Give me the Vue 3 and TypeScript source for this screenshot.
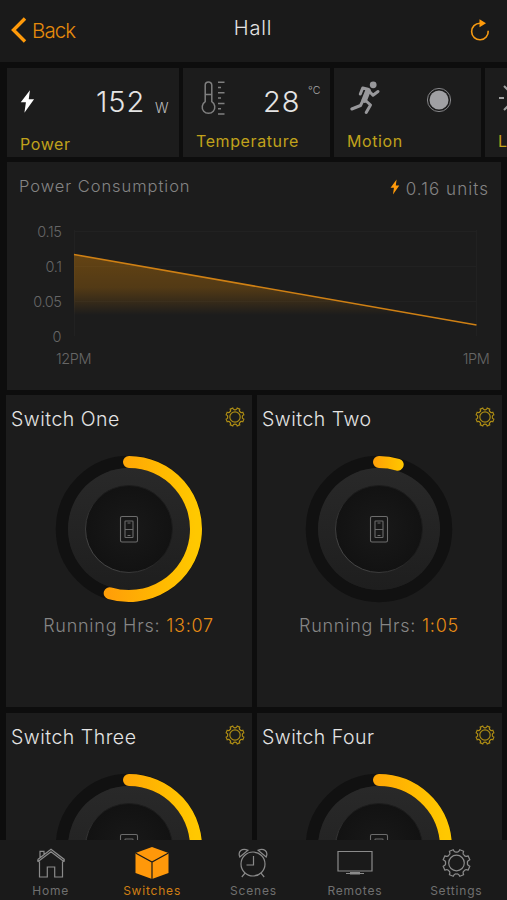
<script setup lang="ts">
interface SwitchCard {
  name: string
  hours?: string
  fraction: number
}

const switches: SwitchCard[] = [
  { name: 'Switch One', hours: '13:07', fraction: 13.117 / 24 },
  { name: 'Switch Two', hours: '1:05', fraction: 1.083 / 24 },
  { name: 'Switch Three', fraction: 0.53 },
  { name: 'Switch Four', fraction: 0.47 },
]

const tabs: string[] = ['Home', 'Switches', 'Scenes', 'Remotes', 'Settings']

function arc(fraction: number): string {
  const a = fraction * Math.PI * 2
  const x = 75 + 67 * Math.sin(a)
  const y = 75 - 67 * Math.cos(a)
  return `M75 8A67 67 0 ${fraction > 0.5 ? 1 : 0} 1 ${x.toFixed(2)} ${y.toFixed(2)}`
}

function gear(outer: number, inner: number, teeth = 8): string {
  const step = (Math.PI * 2) / teeth
  const pt = (r: number, a: number) => `${(15 + r * Math.sin(a)).toFixed(2)} ${(15 - r * Math.cos(a)).toFixed(2)}`
  let d = ''
  for (let i = 0; i < teeth; i++) {
    const a = step * (i + 0.5)
    d += `${i === 0 ? 'M' : 'L'}${pt(outer, a - 0.15)}L${pt(outer, a + 0.15)}`
    d += `Q${pt(inner, a + 0.2)} ${pt(inner + 0.6, a + step / 2)}Q${pt(inner, a + step - 0.2)} ${pt(outer, a + step - 0.15)}`
  }
  return d + 'Z'
}

const gearPath = gear(13.7, 10.4)
</script>

<template>
  <div class="screen">
    <header class="nav">
      <div class="back">
        <svg class="chevron" viewBox="0 0 16 26"><path d="M14 1.5 2.5 13 14 24.5" /></svg>
        <span>Back</span>
      </div>
      <h1 class="title">Hall</h1>
      <svg class="refresh" viewBox="0 0 20 22">
        <path d="M18.2 11.8A8.3 8.3 0 1 1 10 4.2" />
        <path class="head" d="M9.5.3 16 4.3 9.5 8.3z" />
      </svg>
    </header>

    <section class="sensors">
      <article class="sensor power">
        <svg class="bolt" viewBox="0 0 16 26"><path d="M10.6 1 .8 13.8h5.5L4.7 25 15 10.7H9.3z" /></svg>
        <span class="value">152</span><span class="watt">W</span>
        <span class="label">Power</span>
      </article>
      <article class="sensor temp">
        <svg class="thermo" viewBox="0 0 24 36">
          <path d="M4.2 21.7V5.2a3.3 3.3 0 0 1 6.6 0v16.5a6.3 6.3 0 1 1-6.6 0zM4.5 14.5h6" />
          <path d="M17 2.2h6.5M17 12.8h6.5M17 23.4h6.5M17 34h6.5M17 7.5h3M17 18.1h3M17 28.7h3" />
        </svg>
        <span class="value">28</span><span class="degree">°C</span>
        <span class="label">Temperature</span>
      </article>
      <article class="sensor motion">
        <svg class="runner" viewBox="0 0 30 34">
          <circle cx="23.2" cy="3.8" r="3.4" />
          <path class="limb" d="M18 8.2 12.7 7 10.3 13M18.5 9.5 23 14.2 28 10.5M13.5 18.5 10.5 24.5 1.8 28M15 19 20.5 24 16.2 31.5" />
          <path class="torso" d="M18 9.8 14.3 19" />
        </svg>
        <svg class="dot" viewBox="0 0 26 26"><circle cx="13" cy="13" r="11.6" /><circle class="core" cx="13" cy="13" r="9.5" /></svg>
        <span class="label">Motion</span>
      </article>
      <article class="sensor light">
        <svg class="sun" viewBox="0 0 36 36">
          <circle cx="18" cy="18" r="7" />
          <path d="M1 18h5M30 18h5M18 1v5M18 30v5M6 6l4 4M26 26l4 4M6 30l4-4M26 10l4-4" />
        </svg>
        <span class="label">Light</span>
      </article>
    </section>

    <section class="usage">
      <div class="usage-head">
        <span class="usage-title">Power Consumption</span>
        <span class="units">
          <svg class="mini-bolt" viewBox="0 0 16 26"><path d="M10.6 1 .8 14.2h5.5L4.7 25 15 10.7H9.3z" /></svg>
          <span>0.16 units</span>
        </span>
      </div>
      <svg class="chart" viewBox="0 0 494 170">
        <defs>
          <linearGradient id="fill" gradientUnits="userSpaceOnUse" x1="0" y1="34" x2="0" y2="95">
            <stop offset="0" stop-color="#ff9800" stop-opacity=".32" />
            <stop offset=".55" stop-color="#ff9800" stop-opacity=".24" />
            <stop offset="1" stop-color="#ff9800" stop-opacity="0" />
          </linearGradient>
        </defs>
        <path class="grid" d="M67.5 10v106M469.5 10v106M67 11.5h403M67 46.5h403M67 81.5h403" />
        <path d="M67 34.5 469.5 105H67z" fill="url(#fill)" />
        <path class="line" d="M67 34.5 469.5 105" />
        <g class="ticks">
          <text x="54.5" y="17" text-anchor="end">0.15</text>
          <text x="54.5" y="52" text-anchor="end">0.1</text>
          <text x="54.5" y="87" text-anchor="end">0.05</text>
          <text x="54" y="122" text-anchor="end">0</text>
          <text x="66.500" y="144" text-anchor="middle">12PM</text>
          <text x="469" y="144" text-anchor="middle">1PM</text>
        </g>
      </svg>
    </section>

    <section class="switches">
      <article v-for="(s, i) in switches" :key="s.name" class="switch">
        <div class="switch-head">
          <span class="switch-name">{{ s.name }}</span>
          <svg class="cog" viewBox="0 0 30 30"><path :d="gearPath" /><circle cx="15" cy="15" r="7.8" /></svg>
        </div>
        <svg class="dial" viewBox="0 0 150 150">
          <defs>
            <linearGradient :id="'arc' + i" gradientUnits="userSpaceOnUse" :x1="s.fraction < 0.1 ? 69 : 55" y1="0" :x2="s.fraction < 0.1 ? 101 : 142" y2="0">
              <stop offset="0" stop-color="#ff9f08" />
              <stop offset=".6" stop-color="#ffb900" />
              <stop offset="1" stop-color="#ffc800" />
            </linearGradient>
            <linearGradient :id="'ring' + i" x1="0" y1="0" x2="0" y2="1">
              <stop offset="0" stop-color="#292929" />
              <stop offset="1" stop-color="#1e1e1e" />
            </linearGradient>
            <linearGradient :id="'rim' + i" x1="0" y1="1" x2="1" y2="0">
              <stop offset="0" stop-color="#555" />
              <stop offset=".55" stop-color="#1c1c1c" />
            </linearGradient>
            <radialGradient :id="'knob' + i">
              <stop offset="0" stop-color="#191919" />
              <stop offset="1" stop-color="#121212" />
            </radialGradient>
          </defs>
          <circle cx="75" cy="75" r="67" fill="none" stroke="#111" stroke-width="12.5" />
          <circle cx="75" cy="75" r="61" :fill="`url(#ring${i})`" />
          <circle cx="75" cy="75" r="43.5" :fill="`url(#knob${i})`" :stroke="`url(#rim${i})`" />
          <path :d="arc(s.fraction)" fill="none" :stroke="`url(#arc${i})`" stroke-width="12" stroke-linecap="round" />
          <g class="plate">
            <rect x="66.500" y="62.500" width="17" height="25.500" rx="1.5" />
            <rect x="71" y="67" width="8" height="16.500" rx=".6" />
            <path d="M71 75.500h8M73.5 69h3M73.5 81.5h3" />
          </g>
        </svg>
        <div v-if="s.hours" class="hours">Running Hrs: <b>{{ s.hours }}</b></div>
      </article>
    </section>

    <nav class="tabbar">
      <div v-for="t in tabs" :key="t" class="tab" :class="{ active: t === 'Switches' }">
        <svg v-if="t === 'Home'" class="tab-icon" viewBox="0 0 36 34">
          <path d="M6.5 15.500V31h7.800v-10h7.400v10h7.800V15.500M4.800 15.800 18 5.800l13.200 10M4.800 13.400 18 3.300l13.200 10.100v2.400M4.800 13.400v2.400M7 11.500V5.300h4v3" />
        </svg>
        <svg v-else-if="t === 'Switches'" class="tab-icon" viewBox="0 0 36 34">
          <path class="cube" d="M18 1 34.500 7v20L18 33 1.500 27V7z" />
          <path class="seam" d="M1.500 7 18 16 34.500 7M18 16v17" />
        </svg>
        <svg v-else-if="t === 'Scenes'" class="tab-icon" viewBox="0 0 36 34">
          <circle cx="18" cy="18" r="12" />
          <path d="M18.500 10v9h-7M10 27.200 6.800 31M26 27.200 29.200 31M4.800 11C2.500 5.500 7 1.500 13 4.200zM31.200 11C33.500 5.500 29 1.500 23 4.200z" />
        </svg>
        <svg v-else-if="t === 'Remotes'" class="tab-icon" viewBox="0 0 36 34">
          <path d="M1 5.500h34V25H1zM9 27.500h18" /><path class="foot" d="M13 26h10v2.500H13z" />
        </svg>
        <svg v-else class="tab-icon" viewBox="0.500 1 29 28">
          <path :d="gearPath" /><circle cx="15" cy="15" r="7.800" />
        </svg>
        <span>{{ t }}</span>
      </div>
    </nav>
  </div>
</template>

<style>
body {
  background: #0d0d0d;
}
</style>

<style scoped>
.screen {
  width: 507px;
  height: 900px;
  overflow: hidden;
  display: flex;
  flex-direction: column;
  background: #0d0d0d;
  font-family: Inter, 'Liberation Sans', sans-serif;
  font-weight: 300;
  color: #e4e4e4;
}
svg {
  display: block;
  flex: none;
  overflow: visible;
  fill: none;
}
.nav {
  height: 62px;
  flex: none;
  box-sizing: border-box;
  padding: 0 17px 0 11px;
  background: #1a1a1a;
  display: grid;
  grid-template-columns: 1fr auto 1fr;
}
.back {
  display: flex;
  gap: 5px;
  padding-top: 17px;
  font-size: 20.5px;
  line-height: 28px;
  letter-spacing: -0.9px;
  color: #e58a0c;
}
.chevron {
  width: 16px;
  height: 26px;
  stroke: #ff9a0a;
  stroke-width: 3.4;
}
.title {
  margin: 0;
  padding: 14px 0 0 5px;
  font-size: 20px;
  line-height: 28px;
  font-weight: 300;
  letter-spacing: 0.8px;
}
.refresh {
  width: 20px;
  height: 22px;
  margin-top: 19px;
  justify-self: end;
  stroke: #f59a12;
  stroke-width: 1.6;
}
.refresh .head {
  fill: #ff9a0a;
  stroke: none;
}
.sensors {
  display: grid;
  grid-template-columns: 172px 147px 147px 147px;
  gap: 4px;
  padding: 6px 0 0 7px;
  height: 89px;
  flex: none;
}
.sensor {
  background: #1c1c1c;
  display: grid;
  grid-template-rows: 66px 23px;
  align-items: start;
  overflow: hidden;
}
.power {
  grid-template-columns: 89px 59px 24px;
}
.temp {
  grid-template-columns: 80px 45px 22px;
}
.motion {
  grid-template-columns: 92px 55px;
}
.value {
  padding-top: 16px;
  font-size: 29px;
  line-height: 36px;
  letter-spacing: 0.9px;
}
.label {
  grid-row: 2;
  grid-column: 1 / -1;
  padding-left: 13px;
  font-size: 16px;
  line-height: 20px;
  letter-spacing: 0.6px;
  font-weight: 400;
  color: #c0a21b;
  white-space: nowrap;
}
.temp .label,
.motion .label,
.light .label {
  margin-top: -3px;
}
.watt {
  padding-top: 30px;
  font-size: 14px;
  line-height: 20px;
  color: #bbb;
}
.degree {
  padding-top: 16px;
  font-size: 10.5px;
  line-height: 14px;
  color: #aaa;
}
.bolt {
  width: 15px;
  height: 25px;
  margin: 21px 0 0 13px;
  fill: #fff;
}
.thermo {
  width: 24px;
  height: 36px;
  margin: 12px 0 0 18px;
  stroke: #7f7f7f;
  stroke-width: 1.5;
}
.runner {
  width: 30px;
  height: 34px;
  margin: 13px 0 0 16px;
  fill: #98989b;
}
.limb,
.torso {
  fill: none;
  stroke: #98989b;
  stroke-width: 3;
  stroke-linecap: round;
  stroke-linejoin: round;
}
.torso {
  stroke-width: 5.6;
}
.dot {
  width: 26px;
  height: 26px;
  margin-top: 19px;
  stroke: #858588;
}
.core {
  fill: #a0a0a3;
  stroke: none;
}
.sun {
  width: 36px;
  height: 36px;
  margin: 12px 0 0 13px;
  stroke: #a0a0a0;
  stroke-width: 2;
}
.usage {
  margin: 5px 0 0 7px;
  width: 494px;
  height: 228px;
  flex: none;
  background: #1c1c1c;
}
.usage-head {
  height: 58px;
  display: flex;
  justify-content: space-between;
  padding: 0 12px 0 12px;
  font-size: 16.5px;
  letter-spacing: 0.95px;
  line-height: 22px;
  color: #848484;
}
.usage-title {
  padding-top: 13px;
}
.units {
  display: flex;
  gap: 6px;
  padding-top: 16px;
  font-size: 17px;
  letter-spacing: 1.05px;
}
.mini-bolt {
  width: 10px;
  height: 16px;
  margin-top: 1px;
  fill: #ff9a0a;
}
.chart {
  width: 494px;
  height: 170px;
}
.grid {
  stroke: #212121;
}
.line {
  stroke: #cf8014;
  stroke-width: 1.6;
}
.ticks {
  fill: #666;
  font-size: 14.5px;
  letter-spacing: -0.4px;
}
.switches {
  display: grid;
  grid-template-columns: 246px 245px;
  grid-auto-rows: 312px;
  gap: 6px 5px;
  padding: 5px 0 0 6px;
  height: 445px;
  flex: none;
  overflow: hidden;
}
.switch {
  background: #1c1c1c;
  display: flex;
  flex-direction: column;
  align-items: center;
}
.switch-head {
  align-self: stretch;
  height: 58.5px;
  display: flex;
  justify-content: space-between;
  padding: 0 7px 0 5px;
}
.switch-name {
  padding-top: 10px;
  font-size: 19.5px;
  line-height: 28px;
  letter-spacing: 0.5px;
}
.cog {
  width: 20px;
  height: 20px;
  margin-top: 12px;
  stroke: #ad8c14;
  stroke-width: 1.8;
}
.dial {
  width: 150px;
  height: 150px;
  margin-right: 1px;
}
.plate {
  stroke: #6c6c6c;
  stroke-width: 1.1;
}
.hours {
  margin-top: 9.5px;
  padding-right: 1px;
  font-size: 18px;
  line-height: 26px;
  letter-spacing: 0.76px;
  color: #868686;
}
.hours b {
  font-weight: 300;
  color: #e68b14;
}
.tabbar {
  height: 60px;
  flex: none;
  background: #1a1a1a;
  display: grid;
  grid-template-columns: repeat(5, 1fr);
}
.tab {
  display: flex;
  flex-direction: column;
  align-items: center;
  padding-top: 6px;
  font-size: 12px;
  line-height: 16px;
  letter-spacing: 0.8px;
  font-weight: 400;
  color: #707070;
}
.tab-icon {
  width: 36px;
  height: 34px;
  margin-bottom: 3px;
  stroke: #8b8b8b;
  stroke-width: 1.2;
}
.tab:last-child .tab-icon {
  width: 29px;
  height: 28px;
  margin: 3px 0 6px;
}
.active {
  color: #d07f14;
}
.tab-icon .cube {
  fill: #ff980a;
  stroke: none;
}
.tab-icon .seam {
  stroke: #1a1a1a;
}
.foot {
  fill: #8b8b8b;
  stroke: none;
}
</style>
